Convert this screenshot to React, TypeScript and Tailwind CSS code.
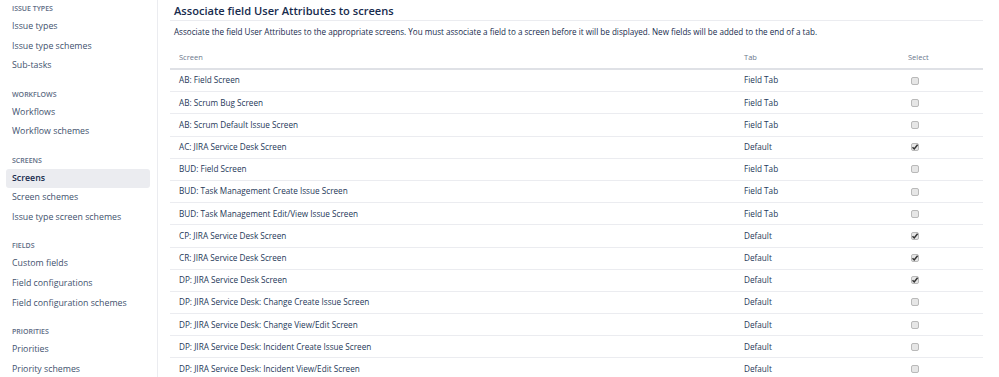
import React from "react";

const font = { fontFamily: '"Open Sans", "Noto Sans", sans-serif' };

type Section = { title: string; items: { label: string; active?: boolean }[] };

const sections: Section[] = [
  { title: "ISSUE TYPES", items: [{ label: "Issue types" }, { label: "Issue type schemes" }, { label: "Sub-tasks" }] },
  { title: "WORKFLOWS", items: [{ label: "Workflows" }, { label: "Workflow schemes" }] },
  { title: "SCREENS", items: [{ label: "Screens", active: true }, { label: "Screen schemes" }, { label: "Issue type screen schemes" }] },
  { title: "FIELDS", items: [{ label: "Custom fields" }, { label: "Field configurations" }, { label: "Field configuration schemes" }] },
  { title: "PRIORITIES", items: [{ label: "Priorities" }, { label: "Priority schemes" }] },
];

const rows: [string, string, boolean][] = [
  ["AB: Field Screen", "Field Tab", false],
  ["AB: Scrum Bug Screen", "Field Tab", false],
  ["AB: Scrum Default Issue Screen", "Field Tab", false],
  ["AC: JIRA Service Desk Screen", "Default", true],
  ["BUD: Field Screen", "Field Tab", false],
  ["BUD: Task Management Create Issue Screen", "Field Tab", false],
  ["BUD: Task Management Edit/View Issue Screen", "Field Tab", false],
  ["CP: JIRA Service Desk Screen", "Default", true],
  ["CR: JIRA Service Desk Screen", "Default", true],
  ["DP: JIRA Service Desk Screen", "Default", true],
  ["DP: JIRA Service Desk: Change Create Issue Screen", "Default", false],
  ["DP: JIRA Service Desk: Change View/Edit Screen", "Default", false],
  ["DP: JIRA Service Desk: Incident Create Issue Screen", "Default", false],
  ["DP: JIRA Service Desk: Incident View/Edit Screen", "Default", false],
];

function Checkbox({ checked }: { checked: boolean }) {
  return (
    <span className="relative inline-block w-[8px] h-[8px] rounded-[2px] border border-[#b9b9b9] bg-[#e6e6e6]">
      {checked && (
        <svg viewBox="0 0 8 8" className="absolute left-[-1px] top-[-1px] w-[8px] h-[8px]">
          <path d="M1.5 4.3 L3.2 6 L6.6 1.8" fill="none" stroke="#333" strokeWidth="1.5" />
        </svg>
      )}
    </span>
  );
}

export default function App() {
  return (
    <div className="w-[999px] h-[377px] overflow-hidden bg-white flex" style={font}>
      <aside className="w-[158px] shrink-0 border-r border-[#ebecf0] pl-[6px] pr-[7px] pt-[4px]">
        {sections.map((s, i) => (
          <div key={s.title} className={i === 0 ? "" : "mt-[13.9px]"}>
            <div className="h-[10px] leading-[10px] text-[7px] font-semibold text-[#5e6c84] pl-[6px]">{s.title}</div>
            <div className="mt-[3px]">
              {s.items.map((it) => (
                <div
                  key={it.label}
                  className={
                    "h-[19.6px] leading-[19.6px] text-[8.8px] pl-[6px] rounded-[3px] " +
                    (it.active ? "bg-[#ebecf0] text-[#172b4d] font-semibold" : "text-[#42526e]")
                  }
                >
                  {it.label}
                </div>
              ))}
            </div>
          </div>
        ))}
      </aside>
      <main className="flex-1 pl-[12px] pr-[16px] pt-[2px]">
        <h2 className="h-[19px] leading-[18px] pl-[4px] text-[11.1px] font-semibold text-[#172b4d] border-b border-[#ebecf0]">
          Associate field User Attributes to screens
        </h2>
        <p className="pl-[4px] mt-[3px] h-[16px] leading-[16px] text-[8.1px] text-[#172b4d]">
          Associate the field User Attributes to the appropriate screens. You must associate a field to a screen before it will be displayed. New fields will be added to the end of a tab.
        </p>
        <div className="mt-[8px]">
          <div className="flex h-[22px] items-center border-b-2 border-[#dfe1e6] text-[7.5px] text-[#6b778c]">
            <div className="w-[574px] pl-[9px]">Screen</div>
            <div className="w-[164px]">Tab</div>
            <div>Select</div>
          </div>
          {rows.map(([name, tab, checked]) => (
            <div key={name} className="flex h-[22.2px] items-center border-b border-[#ebecf0] text-[8.2px] text-[#253858]">
              <div className="w-[574px] pl-[9px]">{name}</div>
              <div className="w-[164px]">{tab}</div>
              <div className="flex pl-[3px]">
                <Checkbox checked={checked} />
              </div>
            </div>
          ))}
        </div>
      </main>
    </div>
  );
}
